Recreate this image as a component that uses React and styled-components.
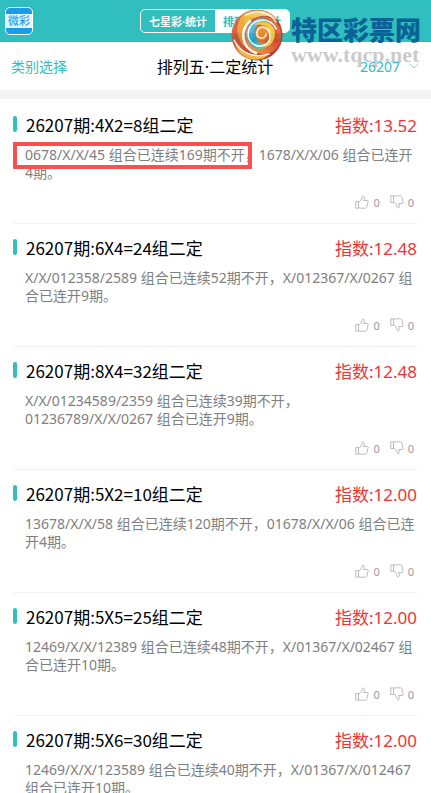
import React, { useState } from 'react';
import styled, { createGlobalStyle } from 'styled-components';

const items = [
	{
		title: '26207期:4X2=8组二定',
		index: '13.52',
		marked: '0678/X/X/45 组合已连续169期不开，',
		text: '1678/X/X/06 组合已连开4期。',
	},
	{
		title: '26207期:6X4=24组二定',
		index: '12.48',
		text: 'X/X/012358/2589 组合已连续52期不开，X/012367/X/0267 组合已连开9期。',
	},
	{
		title: '26207期:8X4=32组二定',
		index: '12.48',
		text: 'X/X/01234589/2359 组合已连续39期不开，01236789/X/X/0267 组合已连开9期。',
	},
	{
		title: '26207期:5X2=10组二定',
		index: '12.00',
		text: '13678/X/X/58 组合已连续120期不开，01678/X/X/06 组合已连开4期。',
	},
	{
		title: '26207期:5X5=25组二定',
		index: '12.00',
		text: '12469/X/X/12389 组合已连续48期不开，X/01367/X/02467 组合已连开10期。',
	},
	{
		title: '26207期:5X6=30组二定',
		index: '12.00',
		text: '12469/X/X/123589 组合已连续40期不开，X/01367/X/012467 组合已连开10期。',
	},
];

const Thumb = ({ down }) => (
	<ThumbSvg viewBox="0 0 14 14" $down={down} aria-hidden="true">
		<path d="M.8 6.5h2.700v6.700H.8zM3.500 7C5.500 6 6.800 4.500 7 2.500C7 .5 9.300 .5 9.300 2.800C9.300 4 9 4.800 8.600 5.500H12.200c1.300 0 1.500 1.500.6 2l-.8 4c-.2 1.100-.7 1.700-1.800 1.700H5.500L3.500 12.500" />
	</ThumbSvg>
);

const Swirl = () => (
	<SwirlSvg viewBox="0 0 52 52" aria-hidden="true">
		<defs>
			<linearGradient id="rim" x1="0" y1="0" x2="1" y2="1">
				<stop offset="0" stopColor="#e0704f" />
				<stop offset=".5" stopColor="#c23a22" />
				<stop offset="1" stopColor="#9c2a1c" />
			</linearGradient>
			<linearGradient id="gold" x1="0" y1="1" x2="1" y2="0">
				<stop offset="0" stopColor="#ee6a22" />
				<stop offset=".5" stopColor="#f9b32d" />
				<stop offset="1" stopColor="#fbe37a" />
			</linearGradient>
			<linearGradient id="flame" x1="1" y1="0" x2="0" y2="1">
				<stop offset="0" stopColor="#f08a3c" />
				<stop offset=".4" stopColor="#d93a22" />
				<stop offset="1" stopColor="#f7a928" />
			</linearGradient>
			<linearGradient id="sea" x1="0" y1="0" x2="1" y2="1">
				<stop offset="0" stopColor="#7cc9e6" />
				<stop offset=".5" stopColor="#1f9fca" />
				<stop offset="1" stopColor="#9ccb3b" />
			</linearGradient>
		</defs>
		<circle cx="26" cy="26" r="25.500" fill="url(#rim)" />
		<path d="M10 8C20-2 38 0 46 11C36 4 24 6 17 14C10 23 13 35 22 43C9 38 1 22 10 8z" fill="url(#gold)" />
		<path d="M17 15C25 5 40 5 47 16C50 21 51 28 49 34C45 43 34 48 24 43C14 37 11 24 17 15z" fill="url(#flame)" />
		<path d="M19 15C25 7 37 8 41 15C34 12 27 14 24 20C22 28 28 36 37 36C33 42 25 42 20 36C14 30 14 21 19 15z" fill="url(#sea)" />
		<path d="M22 18C27 10 39 11 43 20C46 29 41 37 33 38C39 33 40 25 36 20C32 15 26 14 22 18z" fill="#f8c935" />
		<path d="M26 19C31 13 39 18 38 25C37 32 28 34 25 28C24 25 24 22 26 19z" fill="#ef8325" />
		<path d="M4 34C12 44 23 49 37 46C32 51 21 53 13 47C8 44 5 39 4 34z" fill="#f3b02d" />
		<g fill="none" stroke="#fff" strokeLinecap="round">
			<path d="M15 6C25 0 39 3 45 13" strokeWidth="1.500" opacity=".8" />
			<path d="M19 12C8 22 11 39 25 44" strokeWidth="2.500" />
			<path d="M35 25C34 31 25 30 26 23C28 16 38 17 39 26C40 35 29 41 21 34C14 27 17 15 27 12C35 9 43 14 45 20" strokeWidth="1.500" />
			<path d="M3 31C9 43 22 50 38 45" strokeWidth="1.500" opacity=".9" />
		</g>
	</SwirlSvg>
);

const Item = ({ title, index, marked, text }) => (
	<Card>
		<CardHead>
			<CardTitle>{title}</CardTitle>
			<Index>指数:{index}</Index>
		</CardHead>
		<Description>
			{marked && <Marked>{marked}</Marked>}
			{text}
		</Description>
		<Votes>
			<Vote type="button" aria-label="赞">
				<Thumb />0
			</Vote>
			<Vote type="button" aria-label="踩">
				<Thumb down />0
			</Vote>
		</Votes>
	</Card>
);

const App = () => {
	const [tab, setTab] = useState('排列五·统计');

	return (
		<Page>
			<GlobalStyle />
			<Header>
				<Logo href="#">
					<LogoText>微彩</LogoText>
				</Logo>
				<Tabs>
					{['七星彩·统计', '排列五·统计'].map((name) => (
						<Tab key={name} type="button" $active={tab === name} onClick={() => setTab(name)}>
							{name}
						</Tab>
					))}
				</Tabs>
			</Header>
			<Toolbar>
				<Category type="button">类别选择</Category>
				<Heading>排列五·二定统计</Heading>
				<Period>
					<PeriodSelect aria-label="期号" defaultValue="26207">
						<option>26207</option>
					</PeriodSelect>
					<Chevron viewBox="0 0 10 6" aria-hidden="true">
						<path d="M.5 .5l4.500 4.500 4.500-4.500" />
					</Chevron>
				</Period>
			</Toolbar>
			<List>
				{items.map((item) => (
					<Item key={item.title} {...item} />
				))}
			</List>
			<Watermark>
				<Swirl />
				<Brand>
					<BrandName>特区彩票网</BrandName>
					<BrandUrl>www.tqcp.net</BrandUrl>
				</Brand>
			</Watermark>
		</Page>
	);
};

const GlobalStyle = createGlobalStyle`
	* {
		box-sizing: border-box;
	}
	html {
		scrollbar-width: none;
	}
	body {
		margin: 0;
		background: #fff;
		font-family: 'Noto Sans', 'Noto Sans CJK SC', sans-serif;
	}
	button,
	select {
		margin: 0;
		padding: 0;
		border: 0;
		background: none;
		font-family: inherit;
		cursor: pointer;
	}
`;

const Page = styled.div`
	position: relative;
	width: 100%;
`;

const Header = styled.header`
	display: grid;
	grid-template-columns: 1fr auto 1fr;
	align-items: center;
	height: 42px;
	padding: 0 6px 0 5px;
	background: #30bebe;
`;

const Logo = styled.a`
	display: flex;
	align-items: center;
	width: 28px;
	height: 28px;
	border: 1px solid #fff;
	border-radius: 5px;
	background: #1b9be8;
	overflow: hidden;
	text-decoration: none;
`;

const LogoText = styled.span`
	width: 100%;
	background: #e6f5fd;
	color: #2a9fe2;
	font-size: 11px;
	font-weight: 500;
	line-height: 14px;
	text-align: center;
`;

const Tabs = styled.div`
	display: flex;
	width: 150px;
	height: 24px;
	border: 1px solid #fff;
	border-radius: 5px;
	overflow: hidden;
`;

const Tab = styled.button`
	flex: 1;
	background: ${(props) => (props.$active ? '#fff' : 'transparent')};
	color: ${(props) => (props.$active ? '#30bebe' : '#fff')};
	font-size: 11px;
	font-weight: 700;
`;

const Toolbar = styled.div`
	display: grid;
	grid-template-columns: 1fr auto 1fr;
	align-items: center;
	height: 48px;
	padding: 0 12px 0 11px;
`;

const Category = styled.button`
	justify-self: start;
	color: #30bebe;
	font-size: 14px;
`;

const Heading = styled.h1`
	margin: 0;
	font-size: 16px;
	font-weight: 400;
	color: #000;
`;

const Period = styled.div`
	display: flex;
	justify-self: end;
	align-items: center;
	gap: 8px;
`;

const PeriodSelect = styled.select`
	appearance: none;
	color: #30bebe;
	font-size: 14px;
`;

const Chevron = styled.svg`
	width: 10px;
	height: 6px;
	fill: none;
	stroke: #8ed5d5;
`;

const List = styled.main`
	padding: 2px 14px 0 13px;
	border-top: 9px solid #f4f4f4;
`;

const Card = styled.article`
	padding: 11px 0 12px;
	border-bottom: 1px solid #f2f2f2;
`;

const CardHead = styled.div`
	display: flex;
	align-items: center;
	justify-content: space-between;
	height: 24px;
`;

const CardTitle = styled.h2`
	display: flex;
	align-items: center;
	gap: 9px;
	margin: 0;
	color: #000;
	font-family: 'Noto Sans CJK SC', sans-serif;
	font-size: 17px;
	font-weight: 400;

	&::before {
		content: '';
		width: 4px;
		height: 16px;
		border-radius: 2px;
		background: #30bebe;
	}
`;

const Index = styled.span`
	color: #ee3338;
	font-size: 17px;
`;

const Description = styled.p`
	margin: 10px 0 0 12px;
	color: #808080;
	font-size: 14px;
	line-height: 18px;
`;

const Marked = styled.span`
	position: relative;

	&::after {
		content: '';
		position: absolute;
		inset: -3px 7px -5px -12px;
		border: 4px solid #fc5050;
	}
`;

const Votes = styled.div`
	display: flex;
	justify-content: flex-end;
	gap: 10px;
	height: 18px;
	margin-top: 11px;
	padding-right: 3px;
`;

const Vote = styled.button`
	display: flex;
	align-items: center;
	gap: 4px;
	color: #999;
	font-size: 11px;
`;

const ThumbSvg = styled.svg`
	width: 14px;
	height: 14px;
	fill: none;
	stroke: #bbb;
	stroke-linejoin: round;
	transform: ${(props) => (props.$down ? 'scaleY(-1)' : 'none')};
`;

const Watermark = styled.div`
	position: absolute;
	top: 9px;
	right: 10px;
	display: flex;
	gap: 8px;
	pointer-events: none;
`;

const SwirlSvg = styled.svg`
	width: 52px;
	height: 52px;
	opacity: 0.9;
`;

const Brand = styled.div`
	display: flex;
	flex-direction: column;
	padding-top: 6px;
`;

const BrandName = styled.span`
	color: #0a6296;
	font-size: 26px;
	font-weight: 900;
	line-height: 30px;
`;

const BrandUrl = styled.span`
	color: rgba(150, 150, 150, 0.5);
	font-family: 'Liberation Serif', serif;
	font-size: 22px;
	font-weight: 700;
	line-height: 20px;
`;

export default App;
